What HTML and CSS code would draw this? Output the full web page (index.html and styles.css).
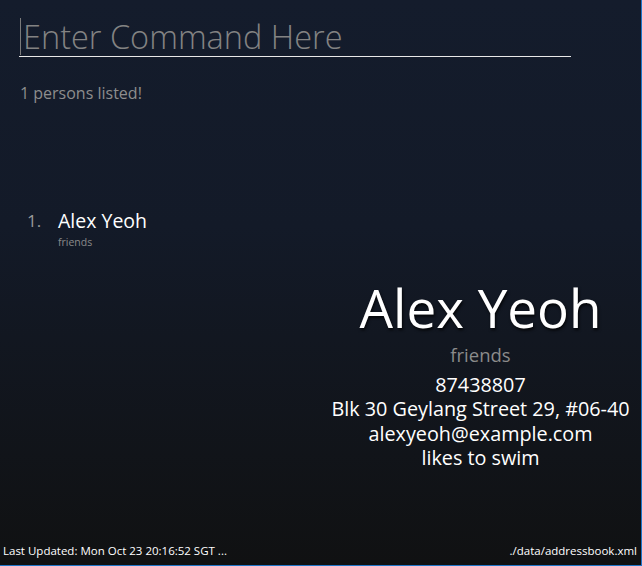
FILE: index.html
```html
<!DOCTYPE html>
<html>
<head>
<meta charset="utf-8">
<link rel="stylesheet" href="styles.css">
</head>
<body>
<div class="app">
  <div class="command">
    <div class="command-box"><span class="caret"></span><span class="placeholder">Enter Command Here</span></div>
  </div>
  <div class="result">1 persons listed!</div>
  <div class="main">
    <div class="list">
      <div class="card">
        <span class="index">1.</span>
        <div class="card-body">
          <div class="card-name">Alex Yeoh</div>
          <div class="card-tag">friends</div>
        </div>
      </div>
    </div>
    <div class="detail">
      <div class="detail-name">Alex Yeoh</div>
      <div class="detail-tag">friends</div>
      <div class="detail-line">87438807</div>
      <div class="detail-line">Blk 30 Geylang Street 29, #06-40</div>
      <div class="detail-line">alexyeoh@example.com</div>
      <div class="detail-line">likes to swim</div>
    </div>
  </div>
  <div class="status">
    <span>Last Updated: Mon Oct 23 20:16:52 SGT ...</span>
    <span>./data/addressbook.xml</span>
  </div>
</div>
</body>
</html>
```
FILE: styles.css
```css
html, body {
  margin: 0;
  padding: 0;
  height: 100%;
}
body {
  font-family: "Open Sans", "Lato", sans-serif;
  background: #101010;
}
.app {
  box-sizing: border-box;
  height: 566px;
  width: 642px;
  display: flex;
  flex-direction: column;
  background: linear-gradient(to bottom, #141c2c 0%, #131a28 40%, #101112 100%);
  border-right: 1px solid #1f75c8;
  border-bottom: 1px solid #1f75c8;
}
.command {
  padding: 18px 0 0 19px;
}
.command-box {
  width: 552px;
  height: 38px;
  border-bottom: 1px solid #e8e8e8;
  display: flex;
  align-items: flex-start;
}
.caret {
  display: block;
  width: 1px;
  height: 37px;
  margin-left: 1px;
  background: #7a7a7a;
}
.placeholder {
  margin-left: 2px;
  margin-top: 0;
  font-size: 32.5px;
  line-height: 38px;
  color: #838383;
  font-weight: 300;
}
.result {
  margin: 26px 0 0 20px;
  font-size: 16px;
  line-height: 20px;
  color: #8d8d8d;
}
.main {
  flex: 1;
  display: flex;
  flex-direction: column;
}
.list {
  padding: 106px 0 0 27px;
}
.card {
  display: flex;
}
.index {
  width: 31px;
  font-size: 17px;
  line-height: 24px;
  color: #9a9a9a;
}
.card-name {
  font-size: 19.5px;
  line-height: 24px;
  color: #ffffff;
}
.card-tag {
  font-size: 10.5px;
  line-height: 16px;
  color: #8a8a8a;
  margin-top: 1px;
}
.detail {
  margin-left: 320px;
  padding-top: 27px;
  text-align: center;
  color: #ffffff;
}
.detail-name {
  font-size: 53px;
  line-height: 62px;
  font-weight: 400;
  text-shadow: 1px 2px 3px rgba(0,0,0,0.8);
}
.detail-tag {
  font-size: 18.5px;
  line-height: 26px;
  color: #8b8b8b;
  margin-top: 3px;
  margin-bottom: 5px;
}
.detail-line {
  font-size: 19.8px;
  line-height: 24.4px;
}
.status {
  display: flex;
  justify-content: space-between;
  padding: 0 4px 7px 3px;
  font-size: 11.5px;
  line-height: 14px;
  color: #ffffff;
}
```
